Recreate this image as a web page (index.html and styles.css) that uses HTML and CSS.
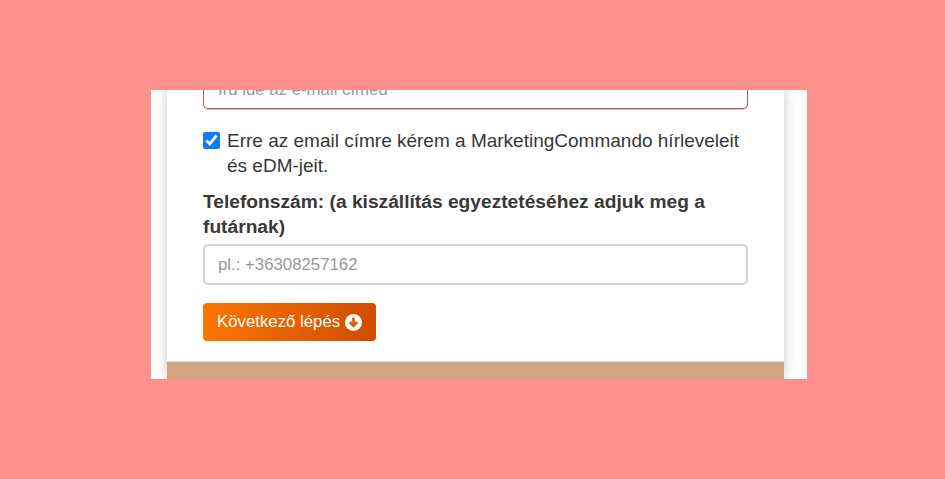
FILE: index.html
```html
<!DOCTYPE html>
<html lang="hu">
<head>
<meta charset="utf-8">
<title>Megrendelés</title>
<link rel="stylesheet" href="styles.css">
</head>
<body>
<div class="frame">
  <div class="panel">
    <form class="form">
      <input class="field field-error" type="text" placeholder="Írd ide az e-mail címed">
      <label class="check">
        <input class="checkbox" type="checkbox" checked>
        <span>Erre az email címre kérem a MarketingCommando hírleveleit és eDM-jeit.</span>
      </label>
      <label class="label" for="tel">Telefonszám: (a kiszállítás egyeztetéséhez adjuk meg a futárnak)</label>
      <input class="field field-tel" id="tel" type="text" placeholder="pl.: +36308257162">
      <button class="btn" type="button">Következő lépés
        <svg class="btn-icon" viewBox="0 0 16 16" aria-hidden="true"><circle cx="8" cy="8" r="8" fill="#fff"/><path d="M8 3.4v7.6M4.4 7.6 8 11.2l3.6-3.6" fill="none" stroke="#e05f00" stroke-width="2.6"/></svg>
      </button>
    </form>
    <div class="footer"></div>
  </div>
</div>
</body>
</html>
```
FILE: styles.css
```css
* { box-sizing: border-box; }
html, body { margin: 0; height: 100%; }
body {
  background: #ff8f8b;
  padding: 90px 0 0 151px;
  font-family: "Liberation Sans", Arial, sans-serif;
  color: #383838;
  overflow: hidden;
}
.frame {
  width: 656px;
  height: 289px;
  background: #fff;
  overflow: hidden;
  padding: 0 23px 0 16px;
}
.panel {
  background: #fff;
  box-shadow: 0 0 12px rgba(0, 0, 0, .22);
  height: 289px;
  display: flex;
  flex-direction: column;
  justify-content: space-between;
}
.form {
  display: flex;
  flex-direction: column;
  align-items: flex-start;
  padding: 0 36px;
}
.field {
  display: block;
  width: 100%;
  height: 42px;
  padding: 0 14px;
  font: 16.8px "Liberation Sans", Arial, sans-serif;
  color: #555;
  background: #fff;
  border: 1px solid #ccc;
  border-radius: 5px;
  outline: none;
}
.field::placeholder { color: #999; opacity: 1; }
.field-error {
  margin-top: -22px;
  padding-top: 2px;
  border-color: #b95654;
  box-shadow: 0 1px 0 rgba(185, 86, 84, .35);
  height: 41px;
}
.field-tel {
  border: 2px solid #d4d4d4;
  height: 41px;
  margin-top: 5px;
  padding: 0 13px;
}
.check {
  display: flex;
  align-items: flex-start;
  gap: 7px;
  margin-top: 19px;
  font-size: 19px;
  line-height: 25px;
}
.checkbox {
  width: 17px;
  height: 17px;
  margin: 4px 0 0;
  accent-color: #0d7bff;
  flex: none;
}
.label {
  margin-top: 12px;
  font-size: 19.2px;
  line-height: 24.5px;
  font-weight: 700;
}
.btn {
  display: flex;
  align-items: center;
  gap: 5px;
  margin-top: 18px;
  height: 38px;
  padding: 0 14px;
  color: #fff;
  font: 16.8px "Liberation Sans", Arial, sans-serif;
  background: linear-gradient(to right, #fb7500, #cf4d00);
  border: 0;
  border-radius: 4px;
}
.btn-icon { width: 17px; height: 17px; flex: none; }
.footer {
  height: 18px;
  background: #d0a57f;
  border-top: 1px solid #e8d5c0;
}
```
